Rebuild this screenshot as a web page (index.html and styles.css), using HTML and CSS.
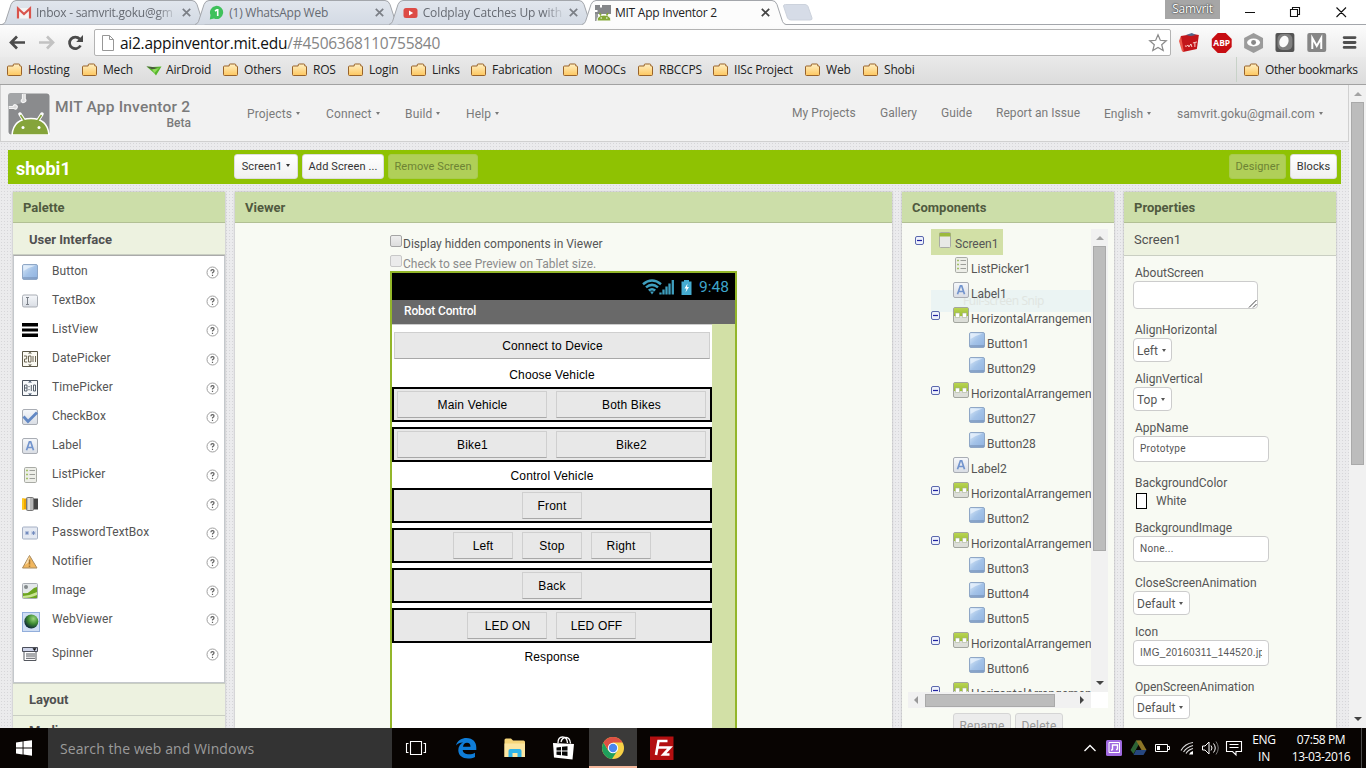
FILE: index.html
```html
<!DOCTYPE html>
<html lang="en">
<head>
<meta charset="utf-8">
<title>MIT App Inventor 2</title>
<link rel="stylesheet" href="styles.css">
</head>
<body>
<svg class="defs" width="0" height="0">
  <defs>
    <linearGradient id="gFolder" x1="0" y1="0" x2="0" y2="1"><stop offset="0" stop-color="#fff0c4"/><stop offset="1" stop-color="#fdc75f"/></linearGradient>
    <linearGradient id="gBlue" x1="0" y1="0" x2="1" y2="1"><stop offset="0" stop-color="#dcebf9"/><stop offset=".5" stop-color="#a4c3e8"/><stop offset="1" stop-color="#8fb2e0"/></linearGradient>
    <linearGradient id="gGrey" x1="0" y1="0" x2="0" y2="1"><stop offset="0" stop-color="#f6f8fb"/><stop offset="1" stop-color="#d9dde4"/></linearGradient>
    <linearGradient id="gTab" x1="0" y1="0" x2="0" y2="1"><stop offset="0" stop-color="#e1e6ed"/><stop offset="1" stop-color="#d3dae4"/></linearGradient>
    <radialGradient id="gGlobe" cx=".65" cy=".3" r=".75"><stop offset="0" stop-color="#9ad57c"/><stop offset=".5" stop-color="#3f8c33"/><stop offset="1" stop-color="#0b2238"/></radialGradient>
    <linearGradient id="gGreen" x1="0" y1="0" x2="0" y2="1"><stop offset="0" stop-color="#b9d452"/><stop offset="1" stop-color="#9cbf33"/></linearGradient>
    <symbol id="folder" viewBox="0 0 16 14"><path d="M1.5 12.500h12q1 0 1-1V4q0-1-1-1h-.7V2q0-1-1-1H7.200q-1 0-1 1v1H1.500q-1 0-1 1v7.500q0 1 1 1z" fill="url(#gFolder)" stroke="#99632a"/></symbol>
    <symbol id="tabshape" viewBox="0 0 204 25"><path d="M0 24.500Q2.500 24 3.500 21.500L9 4.500Q10.500.5 14 .5H190Q193.500.5 195 4.500L200.500 21.500Q201.500 24 204 24.500" fill="url(#gTab)" stroke="#a3a6ab"/></symbol>
    <symbol id="tabshape-on" viewBox="0 0 204 25"><path d="M0 24.500Q2.500 24 3.500 21.500L9 4.500Q10.500.5 14 .5H190Q193.500.5 195 4.500L200.500 21.500Q201.500 24 204 24.500V25H0Z" fill="#fcfcfc"/><path d="M0 24.500Q2.500 24 3.500 21.500L9 4.500Q10.500.5 14 .5H190Q193.500.5 195 4.500L200.500 21.500Q201.500 24 204 24.500" fill="none" stroke="#a3a6ab"/></symbol>
    <symbol id="close" viewBox="0 0 9 9"><path d="M.8.8 8.200 8.200M8.200.8.8 8.200" stroke="currentColor" stroke-width="1.700" fill="none"/></symbol>
    <symbol id="logo" viewBox="0 0 42 42"><rect x=".5" y=".5" width="41" height="41" rx="3" fill="#8a8b8d"/><path d="M0 3Q0 0 3 0H14.500V5.500q-2.500 1-1.500 3t-4 2.500q-1 2.500-3.500 2H0z" fill="#a3a5a7"/><path d="M1 13.500h4q1-2.500 3-1.500t1 3-3 .5H1M14.500 1v5q-2 1-1 2.700t3.200.3.500-3V1" fill="#dcdcdc" stroke="#f4f4f4" stroke-width="1.200"/><path d="M12 21l4.500 7M34 21l-4.500 7" stroke="#fff" stroke-width="3.500" stroke-linecap="round"/><path d="M4 42C5 30 13 25.500 23 25.500S40 30 41 42z" fill="#85a43a" stroke="#fff" stroke-width="1.500"/><path d="M12.500 22l4 6M33.500 22l-4 6" stroke="#85a43a" stroke-width="1.500"/><circle cx="15" cy="34.500" r="1.500" fill="#fff"/><circle cx="31" cy="34.500" r="1.500" fill="#fff"/></symbol>
    <symbol id="logosmall" viewBox="0 0 16 16"><path d="M0 0h16v9H0z" fill="#85878a"/><path d="M0 5h2.500v2H0zM5 0h2v2.500H5z" fill="#fff"/><path d="M0 9h3v7H0z" fill="#9a9c9e"/><path d="M2 16q0-6 7-6t7 6z" fill="#84a838" stroke="#fff" stroke-width="1"/><path d="M4.500 8l1.500 2.500M13 8l-1.500 2.500" stroke="#84a838" stroke-width="1.500"/><path d="M5.500 13h1.500M11 13h1.500" stroke="#fff" stroke-width="1.200"/></symbol>
    <symbol id="button" viewBox="0 0 16 16"><rect x=".5" y=".5" width="15" height="15" rx="1.500" fill="url(#gBlue)" stroke="#8fa7c6"/><path d="M1.500 1.500h12Q8 3 1.500 7z" fill="#e8f2fc" opacity=".75"/><path d="M1 13.500h14v1H1z" fill="#7089ad"/></symbol>
    <symbol id="textbox" viewBox="0 0 16 16"><rect x=".5" y="2" width="15" height="12" rx="1.500" fill="url(#gGrey)" stroke="#a9adb4"/><path d="M4 4.500h3M4 11.500h3M5.500 4.500v7" stroke="#7b8088" fill="none"/></symbol>
    <symbol id="listview" viewBox="0 0 16 16"><path d="M0 1h16v3.500H0zM0 6.500h16v3H0zM0 11.500h16V15H0z"/></symbol>
    <symbol id="datepicker" viewBox="0 0 16 16"><path d="M.5.5h15v15H.5z" fill="#fbfaf3" stroke="#5b5747"/><path d="M6 2.500L8 .800l2 1.700zM6 13.500l2 1.700 2-1.700z" fill="#5b5747"/><path d="M2 5h2.700v3H2.500v3h2.700M6.500 5h2.500v6H6.500zM11 5v6M13.500 5v6" fill="none" stroke="#6c6552"/></symbol>
    <symbol id="timepicker" viewBox="0 0 16 16"><path d="M.5.5h15v15H.5z" fill="#f7f9fb" stroke="#4d5560"/><path d="M6 2.500L8 .800l2 1.700zM6 13.500l2 1.700 2-1.700z" fill="#3d4f68"/><path d="M2.500 5H5v6H2.500zM2.500 8H5M7 6v1.200M7 9v1.200M9.300 5v6M11.500 5h2v6h-2z" fill="none" stroke="#56606c"/></symbol>
    <symbol id="checkbox" viewBox="0 0 16 16"><rect x=".5" y=".5" width="15" height="15" rx="1.500" fill="url(#gGrey)" stroke="#a9adb4"/><path d="M1.500 7.500L6 12.500 15 3.500" fill="none" stroke="#6288c4" stroke-width="2.800"/></symbol>
    <symbol id="label" viewBox="0 0 16 16"><rect x=".5" y=".5" width="15" height="15" rx="1.500" fill="url(#gGrey)" stroke="#a9adb4"/><path d="M4.500 12.300L7.400 3.800h1.300l2.800 8.500M5.800 9.500h4.400" fill="none" stroke="#7294cd" stroke-width="1.700"/></symbol>
    <symbol id="listpicker" viewBox="0 0 16 16"><rect x="2.500" y=".5" width="12" height="15" rx="1.200" fill="#edeee8" stroke="#a9aba5"/><path d="M4 3.500h2M4 7.500h2M4 11.500h2" stroke="#a3c266" stroke-width="1.500"/><path d="M7.500 3.500H13M7.500 7.500H13M7.500 11.500H13" stroke="#9c9e99"/></symbol>
    <symbol id="slider" viewBox="0 0 16 16"><path d="M0 2.500h5v11H0z" fill="#f0a800"/><path d="M0 2.500h2v11H0z" fill="#ffc91e"/><path d="M11 2.500h5v11h-5z" fill="#444"/><rect x="4.500" y="1.500" width="7" height="13" rx="1" fill="#b7b7b7" stroke="#777"/><path d="M7 2v12" stroke="#ddd" stroke-width="2"/></symbol>
    <symbol id="password" viewBox="0 0 16 16"><rect x=".5" y="2" width="15" height="12" rx="1" fill="#e4e9f2" stroke="#a5b0c4"/><path d="M3 8h4M5 6v4M3.600 6.600l2.800 2.800M6.400 6.600L3.600 9.400M9.500 8h4M11.500 6v4M10.100 6.600l2.800 2.800M12.900 6.600l-2.800 2.800" stroke="#6f89bd" stroke-width=".9"/></symbol>
    <symbol id="notifier" viewBox="0 0 16 16"><path d="M7.500 1.500L15 14H.500z" fill="#f1b75f" stroke="#a88a5e"/><path d="M7.500 2L3 11l4-3z" fill="#fbe2b5"/><path d="M7.500 5.500v5M7.500 11.500v1.500" stroke="#a57634" stroke-width="1.500"/></symbol>
    <symbol id="image" viewBox="0 0 16 16"><rect x=".5" y=".5" width="15" height="15" rx="1" fill="#e4e8ea" stroke="#a9adb4"/><circle cx="4" cy="4" r="2" fill="#84898c"/><path d="M1 10Q6 11 9 7.500T15 4v11H1z" fill="#6ca51f"/><path d="M1 13Q8 12.500 15 9v3Q9 15 1 15z" fill="#c9e492"/></symbol>
    <symbol id="webviewer" viewBox="0 0 18 20"><rect x=".5" y=".5" width="17" height="19" fill="#cfdef4" stroke="#92aedb"/><circle cx="9.300" cy="9.500" r="7" fill="url(#gGlobe)"/></symbol>
    <symbol id="spinner" viewBox="0 0 16 16"><path d="M.5 1.500h15v4H.5z" fill="#cdd3e8" stroke="#4c4f5a"/><path d="M10.500 2.300h4L12.500 5z" fill="#111"/><path d="M2 6v8.500h12V6M4 8h9M4 10h9M4 12.300h9" fill="none" stroke="#55585f"/></symbol>
    <symbol id="screen" viewBox="0 0 16 16"><rect x="2.500" y=".5" width="11" height="15" rx="1" fill="#e8e9e6" stroke="#a9aba5"/><path d="M2.500 1h11v3.500h-11z" fill="#9bb93d"/></symbol>
    <symbol id="harr" viewBox="0 0 16 16"><rect x=".5" y=".5" width="15" height="15" rx="1.500" fill="#dcded8" stroke="#a3a69f"/><path d="M1 1h14v8H1z" fill="url(#gGreen)"/><path d="M2.500 6h4v4.500h-4zM9.500 6h4v4.500h-4z" fill="#fff" stroke="#aab497" stroke-width=".6"/></symbol>
    <symbol id="minus" viewBox="0 0 9 9"><rect x=".5" y=".5" width="8" height="8" rx="1.500" fill="#eef1fb" stroke="#5b68ad"/><path d="M2 4.500h5" stroke="#2222a0" stroke-width="1.200"/></symbol>
    <symbol id="help" viewBox="0 0 13 13"><circle cx="6.500" cy="6.500" r="5.500" fill="#fff" stroke="#9f9f9f"/><path d="M4.900 5.200q0-1.600 1.600-1.600T8 5.100q0 .9-1.500 1.700v.8M6.500 8.700v1.200" fill="none" stroke="#606060" stroke-width="1.200"/></symbol>
  </defs>
</svg>

<div class="tabstrip">
  <div class="tab"><svg class="shape"><use href="#tabshape"/></svg>
    <svg class="fav" viewBox="0 0 16 16"><path d="M1 3h14v10.500H1z" fill="#f3f3f3"/><path d="M2 13.500V3.500L8 9l6-5.500v10" fill="none" stroke="#d9544c" stroke-width="2.200"/></svg>
    <span class="tt fade">Inbox - samvrit.goku@gm</span><svg class="x"><use href="#close"/></svg></div>
  <div class="tab"><svg class="shape"><use href="#tabshape"/></svg>
    <svg class="fav" viewBox="0 0 16 16"><path d="M.8 14.500L1.500 10A6.600 6.600 0 1 1 5 13.500z" fill="#3fc15b"/><path d="M6 6l2-1.200h.7V11" fill="none" stroke="#fff" stroke-width="1.600"/></svg>
    <span class="tt">(1) WhatsApp Web</span><svg class="x"><use href="#close"/></svg></div>
  <div class="tab"><svg class="shape"><use href="#tabshape"/></svg>
    <svg class="fav" viewBox="0 0 16 16"><rect x=".5" y="3" width="14" height="10" rx="2.500" fill="#dd4b45"/><path d="M6 5.500v5L10.200 8z" fill="#fff"/></svg>
    <span class="tt fade t3">Coldplay Catches Up with</span><svg class="x"><use href="#close"/></svg></div>
  <div class="tab on"><svg class="shape"><use href="#tabshape-on"/></svg>
    <svg class="fav"><use href="#logosmall"/></svg>
    <span class="tt">MIT App Inventor 2</span><svg class="x"><use href="#close"/></svg></div>
  <svg class="newtab" viewBox="0 0 34 18"><path d="M1.500 2Q1.500.5 3.500.5H23q2 0 3 2l4 11.500q.5 2-2 2H9q-2.500 0-3.500-2z" fill="#d6dce7" stroke="#ccd2dc"/></svg>
  <div class="winctl">
    <span class="user">Samvrit</span>
    <svg viewBox="0 0 120 25"><path d="M15 12.500h10M60.500 9.500h7v7h-7zM62.500 9V7.500h7v7H68M106.500 7.500l9.500 9.500M116 7.500L106.500 17" fill="none" stroke="#111" stroke-width="1.100"/></svg>
  </div>
</div>

<div class="toolbar">
  <svg class="navs" viewBox="0 0 94 32"><path d="M25 17.500H12M17 11.500l-6 6 6 6" fill="none" stroke="#4b4b4b" stroke-width="2.700"/><path d="M39 17.500h13M47 11.500l6 6-6 6" fill="none" stroke="#c2c2c2" stroke-width="2.700"/><path d="M80.500 20.500a5.800 5.800 0 1 1-.800-6.500" fill="none" stroke="#4b4b4b" stroke-width="2.700"/><path d="M83 10v7h-6.800z" fill="#4b4b4b"/></svg>
  <div class="omni">
    <svg class="page" viewBox="0 0 12 16"><path d="M.5.5h7l4 4v11H.5zM7.500.5v4h4" fill="#fff" stroke="#979797"/></svg>
    <span class="url">ai2.appinventor.mit.edu<i>/#4506368110755840</i></span>
    <svg class="star" viewBox="0 0 20 20"><path d="M10 1.800l2.300 5.500 6 .5-4.600 3.900 1.500 5.800L10 14.400l-5.200 3.100 1.500-5.800L1.700 7.800l6-.5z" fill="#fff" stroke="#8a8a8a" stroke-width="1.200"/></svg>
  </div>
  <svg class="exts" viewBox="0 0 196 32">
    <path d="M9 11l12-2 6 1-2 14-14 3L9 18z" fill="#c2151a"/><path d="M9 11l3 16 -2-1-3-10z" fill="#ee5a4d"/><path d="M14 10l6-2 4 2-5 1z" fill="#53678c"/><path d="M13 21q2 1 3-1l1 2 2-3 1 3M21 18l4-1M23 18v4" stroke="#fbd6cf" fill="none"/>
    <path d="M46 8h8l6 6v8l-6 6h-8l-6-6v-8z" fill="#c70d12"/><text x="50" y="21.200" class="abp">ABP</text>
    <path d="M82 8l9.500 5v10L82 28l-9.500-5V13z" fill="#9b9b9b"/><ellipse cx="82" cy="17.500" rx="6.500" ry="4" fill="#fff"/><circle cx="82" cy="17.500" r="2.500" fill="#888"/>
    <rect x="104" y="8" width="19" height="19" rx="2" fill="#545454"/><rect x="106" y="9" width="15" height="16" rx="5" fill="#808080"/><ellipse cx="112.500" cy="16.500" rx="4.500" ry="6" transform="rotate(20 112.500 16.500)" fill="#fafafa"/>
    <rect x="136" y="8" width="19" height="19" rx="2" fill="#868686"/><path d="M141 24V13l4.500 8 4.500-8V24" fill="none" stroke="#fff" stroke-width="2"/>
    <path d="M173 12.500h11M173 17.500h11M173 22.500h11" stroke="#4f4f4f" stroke-width="2.800" stroke-linecap="round"/>
  </svg>
</div>

<div class="bookmarks">
  <span class="bm"><svg><use href="#folder"/></svg>Hosting</span>
  <span class="bm"><svg><use href="#folder"/></svg>Mech</span>
  <span class="bm air"><svg viewBox="0 0 16 14"><path d="M.5 3.500l6 .5 9-.5-5.500 9-2-2.500z" fill="#57b62b"/><path d="M.5 3.500l6 .5 6 1-6 1.500z" fill="#4a5a3e"/><path d="M6 6.500l7-1.500-4.500 5z" fill="#8fdc5a"/></svg>AirDroid</span>
  <span class="bm"><svg><use href="#folder"/></svg>Others</span>
  <span class="bm"><svg><use href="#folder"/></svg>ROS</span>
  <span class="bm"><svg><use href="#folder"/></svg>Login</span>
  <span class="bm"><svg><use href="#folder"/></svg>Links</span>
  <span class="bm"><svg><use href="#folder"/></svg>Fabrication</span>
  <span class="bm"><svg><use href="#folder"/></svg>MOOCs</span>
  <span class="bm"><svg><use href="#folder"/></svg>RBCCPS</span>
  <span class="bm"><svg><use href="#folder"/></svg>IISc Project</span>
  <span class="bm"><svg><use href="#folder"/></svg>Web</span>
  <span class="bm"><svg><use href="#folder"/></svg>Shobi</span>
  <span class="bm other"><svg><use href="#folder"/></svg>Other bookmarks</span>
</div>

<div class="page-wrap">
  <div class="site">
    <header class="top">
      <svg class="logo"><use href="#logo"/></svg>
      <div class="brand"><b>MIT App Inventor 2</b><span>Beta</span></div>
      <nav class="menu"><a class="dd">Projects</a><a class="dd">Connect</a><a class="dd">Build</a><a class="dd">Help</a></nav>
      <nav class="links"><a>My Projects</a><a>Gallery</a><a>Guide</a><a>Report an Issue</a><a class="dd">English</a><a class="dd">samvrit.goku@gmail.com</a></nav>
    </header>

    <div class="greenbar">
      <span class="proj">shobi1</span>
      <span class="btn dd b1">Screen1</span><span class="btn b2">Add Screen ...</span><span class="btn off b3">Remove Screen</span>
      <span class="btn off b4">Designer</span><span class="btn b5">Blocks</span>
    </div>

    <main class="cols">
      <section class="panel palette">
        <h2>Palette</h2>
        <h3>User Interface</h3>
        <ul class="items">
          <li><svg><use href="#button"/></svg><span>Button</span><svg class="q"><use href="#help"/></svg></li>
          <li><svg><use href="#textbox"/></svg><span>TextBox</span><svg class="q"><use href="#help"/></svg></li>
          <li><svg><use href="#listview"/></svg><span>ListView</span><svg class="q"><use href="#help"/></svg></li>
          <li><svg><use href="#datepicker"/></svg><span>DatePicker</span><svg class="q"><use href="#help"/></svg></li>
          <li><svg><use href="#timepicker"/></svg><span>TimePicker</span><svg class="q"><use href="#help"/></svg></li>
          <li><svg><use href="#checkbox"/></svg><span>CheckBox</span><svg class="q"><use href="#help"/></svg></li>
          <li><svg><use href="#label"/></svg><span>Label</span><svg class="q"><use href="#help"/></svg></li>
          <li><svg><use href="#listpicker"/></svg><span>ListPicker</span><svg class="q"><use href="#help"/></svg></li>
          <li><svg><use href="#slider"/></svg><span>Slider</span><svg class="q"><use href="#help"/></svg></li>
          <li><svg><use href="#password"/></svg><span>PasswordTextBox</span><svg class="q"><use href="#help"/></svg></li>
          <li><svg><use href="#notifier"/></svg><span>Notifier</span><svg class="q"><use href="#help"/></svg></li>
          <li><svg><use href="#image"/></svg><span>Image</span><svg class="q"><use href="#help"/></svg></li>
          <li class="tall"><svg><use href="#webviewer"/></svg><span>WebViewer</span><svg class="q"><use href="#help"/></svg></li>
          <li><svg><use href="#spinner"/></svg><span>Spinner</span><svg class="q"><use href="#help"/></svg></li>
        </ul>
        <h3>Layout</h3>
        <h3>Media</h3>
      </section>

      <section class="panel viewer">
        <h2>Viewer</h2>
        <div class="stage">
          <div class="chk"><i></i>Display hidden components in Viewer</div>
          <div class="chk dim"><i></i>Check to see Preview on Tablet size.</div>
          <div class="phone">
            <div class="status">
              <svg viewBox="0 0 50 16"><g fill="none" stroke="#3f9fbf" stroke-width="2.500"><path d="M1 5.200q9-7.500 18 0M4 8.400q6-5 12 0M6.800 11.500q3.200-2.500 6.400 0"/></g><path d="M8 12.500h4l-2 3z" fill="#3f9fbf"/><path d="M18.500 15.500v-2M21.500 15.500v-5M24.500 15.500v-8M27.500 15.500v-11M30.800 15.500V1" stroke="#3f9fbf" stroke-width="2.300"/><path d="M39.500 2.500H42V1h5v1.500h2.500V16h-10z" fill="#45abd0"/><path d="M45.500 4.500l-3 5h2l-1 4 3.500-5.500h-2z" fill="#fff"/></svg>
              <span>9:48</span>
            </div>
            <div class="apptitle">Robot Control</div>
            <div class="form">
              <div class="formbody">
                <div class="pb wide">Connect to Device</div>
                <div class="lbl">Choose Vehicle</div>
                <div class="arr"><span class="pb w150">Main Vehicle</span><span class="pb w150">Both Bikes</span></div>
                <div class="arr"><span class="pb w150">Bike1</span><span class="pb w150">Bike2</span></div>
                <div class="lbl">Control Vehicle</div>
                <div class="arr"><span class="pb w60">Front</span></div>
                <div class="arr"><span class="pb w60">Left</span><span class="pb w60">Stop</span><span class="pb w60">Right</span></div>
                <div class="arr"><span class="pb w60">Back</span></div>
                <div class="arr"><span class="pb w80">LED ON</span><span class="pb w80">LED OFF</span></div>
                <div class="lbl">Response</div>
              </div>
            </div>
          </div>
        </div>
      </section>

      <section class="panel components">
        <h2>Components</h2>
        <div class="treebox">
          <div class="tree">
            <div class="snip">Full-screen Snip</div>
            <div class="row root"><svg class="mn"><use href="#minus"/></svg><span class="sel"><svg><use href="#screen"/></svg>Screen1</span></div>
            <div class="row l1"><svg><use href="#listpicker"/></svg>ListPicker1</div>
            <div class="row l1"><svg><use href="#label"/></svg>Label1</div>
            <div class="row l1"><svg class="mn"><use href="#minus"/></svg><svg><use href="#harr"/></svg>HorizontalArrangement1</div>
            <div class="row l2"><svg><use href="#button"/></svg>Button1</div>
            <div class="row l2"><svg><use href="#button"/></svg>Button29</div>
            <div class="row l1"><svg class="mn"><use href="#minus"/></svg><svg><use href="#harr"/></svg>HorizontalArrangement2</div>
            <div class="row l2"><svg><use href="#button"/></svg>Button27</div>
            <div class="row l2"><svg><use href="#button"/></svg>Button28</div>
            <div class="row l1"><svg><use href="#label"/></svg>Label2</div>
            <div class="row l1"><svg class="mn"><use href="#minus"/></svg><svg><use href="#harr"/></svg>HorizontalArrangement3</div>
            <div class="row l2"><svg><use href="#button"/></svg>Button2</div>
            <div class="row l1"><svg class="mn"><use href="#minus"/></svg><svg><use href="#harr"/></svg>HorizontalArrangement4</div>
            <div class="row l2"><svg><use href="#button"/></svg>Button3</div>
            <div class="row l2"><svg><use href="#button"/></svg>Button4</div>
            <div class="row l2"><svg><use href="#button"/></svg>Button5</div>
            <div class="row l1"><svg class="mn"><use href="#minus"/></svg><svg><use href="#harr"/></svg>HorizontalArrangement5</div>
            <div class="row l2"><svg><use href="#button"/></svg>Button6</div>
            <div class="row l1"><svg class="mn"><use href="#minus"/></svg><svg><use href="#harr"/></svg>HorizontalArrangement6</div>
          </div>
          <div class="vs"><i class="up pale"></i><b></b><i class="down"></i></div>
          <div class="hs"><i class="left"></i><b></b><i class="right"></i></div>
          <div class="corner"></div>
        </div>
        <div class="cbtns"><span>Rename</span><span>Delete</span></div>
      </section>

      <section class="panel props">
        <h2>Properties</h2>
        <h4>Screen1</h4>
        <div class="pl">
          <label>AboutScreen</label><div class="area"><svg viewBox="0 0 9 9"><path d="M1 8.500L8.500 1M5 8.500L8.500 5" stroke="#444" fill="none"/></svg></div>
          <label>AlignHorizontal</label><div class="sel2 dd">Left</div>
          <label>AlignVertical</label><div class="sel2 dd">Top</div>
          <label>AppName</label><div class="inp">Prototype</div>
          <label>BackgroundColor</label><div class="color"><i></i>White</div>
          <label>BackgroundImage</label><div class="inp">None...</div>
          <label>CloseScreenAnimation</label><div class="sel2 dd long">Default</div>
          <label>Icon</label><div class="inp img"><span>IMG_20160311_144520.jpg</span></div>
          <label>OpenScreenAnimation</label><div class="sel2 dd long">Default</div>
        </div>
      </section>
    </main>
  </div>
  <div class="scroll"><i class="up"></i><b></b><i class="down"></i></div>
</div>

<footer class="taskbar">
  <svg class="start" viewBox="0 0 48 40"><path d="M16 14.400l6.600-.9v6H16zM23.500 13.300L32 12.200v7.300h-8.500zM16 20.400h6.600v6l-6.600-.9zM23.500 20.400H32v7.300l-8.500-1.200z" fill="#fff"/></svg>
  <div class="search">Search the web and Windows</div>
  <svg class="tasks" viewBox="392 0 300 40">
    <path d="M410.500 13.500h11v13h-11zM408.500 15.500h-2v9h2M423.500 15.500h2v9h-2" fill="none" stroke="#fff" stroke-width="1.100"/>
    <path d="M456 17.500C457.500 12 462 10 466.500 10c6.500 0 9.800 4.300 9.800 9.500v2.500h-13.600c.3 3 3 4.300 6.300 4.300 2.300 0 4.300-.6 6-1.600v4.200c-2 1-4.300 1.500-7 1.500-5.500 0-9.700-3-9.700-8.200 0-3.300 1.700-6.200 4.700-7.700-3 0-5.500 1-7 3zm7 1.300h7.500c0-2.500-1.200-4-3.500-4-2.200 0-3.600 1.500-4 4z" fill="#0f7dd8"/>
    <path d="M504.500 12q0-1.500 1.500-1.500h5l2 2h10.500q1.500 0 1.500 1.500V29h-20.500z" fill="#f5d57a"/><path d="M504.500 15.500H525V29h-20.500z" fill="#fbe6a2"/><path d="M508.500 29v-6q0-2 2-2h9q2 0 2 2v6h-4v-4h-5v4z" fill="#2fb4e8"/>
    <path d="M553 15l21 1-1.500 15.500L554 29.500z" fill="#fff"/><path d="M558 15q0-6 4.500-6t5 6M561 14q1-4.500 5-4.500t4.500 6" fill="none" stroke="#fff" stroke-width="1.300"/><path d="M556.500 19.500l4.500-.5v3.500h-4.500zM562 18.800l5.500-.6v4.300H562zM556.500 23.500h4.500v3.700l-4.500-.5zM562 23.500h5.500v4.400L562 27.300z" fill="#060606"/>
    <path d="M589 0h48v38h-48z" fill="#3b3a39"/><path d="M589 38h48v2h-48z" fill="#f3b79c"/>
    <circle cx="613" cy="20" r="11" fill="#f7d046"/><path d="M603.500 14.500A11 11 0 0 0 612 31L617.500 22.500 608.200 22.500z" fill="#1f9f5c"/><path d="M603.500 14.500A11 11 0 0 1 622.600 14.500H613L608 22z" fill="#dd5044"/><circle cx="613" cy="20" r="5.200" fill="#fff"/><circle cx="613" cy="20" r="4.200" fill="#4b86f0"/>
    <path d="M650 8.500h23.500V32H650z" fill="#b30f10"/><path d="M656 27l2.500-14h9M657 19.500h6.500M663.500 19.500h6.500l-6.500 7h6" fill="none" stroke="#fff" stroke-width="2.600"/>
  </svg>
  <svg class="tray" viewBox="1080 0 166 40">
    <path d="M1084.500 23l5.500-5.500 5.500 5.500" fill="none" stroke="#fff" stroke-width="1.300"/>
    <rect x="1106" y="12" width="16" height="16" rx="1.500" fill="#a06ae0"/><path d="M1109 14.500h10.500v10H1109z" fill="none" stroke="#fff"/><path d="M1112.500 22v-5h5v4.500M1111 22h1.500M1116 21.500h1.500" fill="none" stroke="#fff" stroke-width="1.400"/>
    <path d="M1136 12.500h5l-5 9-2.500 4.500-3-4z" fill="#2c6335"/><path d="M1136 12.500h5l5.500 9.500h-5z" fill="#8b7426"/><path d="M1133.500 27l2.500-5h10.500l-3 5z" fill="#27477f"/>
    <path d="M1155.500 16.500h12v7h-12zM1168 18.500h1.500v3h-1.500" fill="none" stroke="#fff"/><path d="M1157 18h3v4h-3z" fill="#fff"/>
    <path d="M1181 22.500Q1185 15.500 1193 14.500M1183.500 24Q1187 19 1193 17.500M1186 25.500Q1188.500 21.500 1193 20.500" fill="none" stroke="#ddd" stroke-width="1.200"/><path d="M1189 26.500q1-3 4-3.500v3.500z" fill="#fff"/>
    <path d="M1202.500 18v4h2.500l4 4V14l-4 4z" fill="none" stroke="#fff"/><path d="M1211 17.500q2 2.500 0 5M1213.500 15.500q3.500 4.500 0 9" fill="none" stroke="#fff"/><path d="M1216 13.500q4.500 6.500 0 13" fill="none" stroke="#777"/>
    <path d="M1226.500 13.500h15v10h-5.500v3.500l-3.500-3.500h-6zM1229.500 16.500h9M1229.500 19.500h9" fill="none" stroke="#fff" stroke-width="1.100"/>
  </svg>
  <div class="lang">ENG<br>IN</div>
  <div class="clock">07:58 PM<br>13-03-2016</div>
  <div class="peek"></div>
</footer>
</body>
</html>
```

FILE: styles.css
```css
* { box-sizing: border-box; }
body { margin: 0; width: 1366px; height: 768px; overflow: hidden; display: flex; flex-direction: column; font-family: Roboto, "Liberation Sans", sans-serif; font-size: 12px; color: #555; background: #fff; }
.defs { position: absolute; }
svg { display: block; flex: none; }
h2, h3, h4, ul { margin: 0; padding: 0; list-style: none; }

/* browser tabs */
.tabstrip { height: 25px; flex: none; display: flex; padding-left: 2px; background: #fff; border-bottom: 1px solid #a3a6ab; font: 12px/25px "Open Sans", "Noto Sans", sans-serif; color: #666a72; }
.tab { position: relative; width: 204px; height: 25px; margin-right: -10.700px; padding-left: 14px; display: flex; align-items: center; flex: none; }
.tab.on { color: #222; z-index: 2; padding-left: 13px; }
.shape { position: absolute; left: 0; top: 0; width: 204px; height: 25px; }
.fav { position: relative; width: 16px; height: 16px; margin-right: 4px; }
.tt { position: relative; width: 142px; white-space: nowrap; overflow: hidden; letter-spacing: -.25px; }
.tt.t3 { letter-spacing: -.1px; }
.fade { -webkit-mask-image: linear-gradient(90deg, #000 85%, transparent); mask-image: linear-gradient(90deg, #000 85%, transparent); }
.x { position: relative; width: 9px; height: 9px; margin-left: 4px; color: #7b7f86; }
.on .x { color: #444; }
.newtab { width: 34px; height: 18px; margin: 4px 0 0 7px; }
.winctl { margin-left: auto; display: flex; width: 201px; }
.winctl svg { width: 120px; height: 25px; margin-left: 10px; }
.user { width: 55px; height: 19px; background: #a6a6a6; color: #fff; text-align: center; line-height: 18px; text-shadow: 0 0 2px #333, 0 0 1px #333; letter-spacing: -.3px; }

/* toolbar */
.toolbar { height: 32px; flex: none; display: flex; background: linear-gradient(#fcfcfc, #ebebeb); }
.navs { width: 94px; height: 32px; }
.omni { width: 1077px; height: 27px; margin-top: 4px; border: 1px solid #b3b3b3; border-radius: 2px; background: #fff; display: flex; align-items: center; padding-left: 7px; }
.page { width: 12px; height: 16px; }
.url { flex: 1; margin-left: 6px; font: 15.500px/24px "Open Sans", "Noto Sans", sans-serif; letter-spacing: -.26px; color: #111; }
.url i { font-style: normal; color: #858585; }
.star { width: 20px; height: 20px; margin-right: 2px; }
.exts { width: 195px; height: 32px; margin-left: 1px; margin-right: -1px; }
.abp { font: bold 8.500px "Open Sans", sans-serif; fill: #fff; text-anchor: middle; }

.bookmarks { height: 28px; flex: none; display: flex; padding: 0 0 2px 7px; border-bottom: 1px solid #a2a2a2; background: linear-gradient(#e9e9e9, #dcdcdc); font: 12px/26px "Open Sans", "Noto Sans", sans-serif; letter-spacing: -.2px; color: #222; }
.bm { display: flex; align-items: center; flex: none; white-space: nowrap; width: 75px; }
.bm svg { width: 16px; height: 14px; margin-right: 5px; }
.bm:nth-child(2) { width: 64px; }
.bm:nth-child(3) { width: 77px; }
.bm:nth-child(4) { width: 69px; }
.bm:nth-child(5) { width: 56px; }
.bm:nth-child(6) { width: 63px; }
.bm:nth-child(7) { width: 60px; }
.bm:nth-child(8) { width: 92px; }
.bm:nth-child(11) { width: 92px; }
.bm:nth-child(12) { width: 58px; }
.bm.air svg { margin-right: 4px; }
.bm.other { width: 130px; margin-left: auto; border-left: 1px solid #c8d2c8; padding-left: 7px; letter-spacing: -.4px; }

/* page */
.page-wrap { height: 643px; flex: none; display: flex; overflow: hidden; }
.site { width: 1349px; background-color: #ebebed; background-image: radial-gradient(#d6d6d9 .7px, transparent .9px); background-size: 3px 3px; }
.top { height: 57px; display: flex; background: #f2f2f2; border: 1px solid #d0d0d0; border-top: 0; color: #7a7a7a; }
.logo { width: 42px; height: 42px; margin: 8px 0 0 7px; }
.brand { width: 191px; padding: 13px 49px 0 5px; display: flex; flex-direction: column; line-height: 16px; }
.brand b { font-size: 15.500px; font-weight: 500; white-space: nowrap; line-height: 18px; letter-spacing: .2px; }
.brand span { align-self: flex-end; margin-right: 1px; line-height: 14px; font-size: 12px; font-weight: 500; }
.menu, .links { display: flex; line-height: 16px; padding-top: 21px; letter-spacing: .15px; }
.menu { margin-left: 6px; width: 545px; }
.menu a { width: 79px; }
.menu a:nth-child(3) { width: 61px; }
.dd::after { content: ""; display: inline-block; margin-left: 4px; vertical-align: 3px; border: 2.500px solid transparent; border-top: 3.500px solid currentColor; border-bottom: 0; }
.links { padding-top: 20px; letter-spacing: .05px; }
.links a { white-space: nowrap; width: 88px; }
.links a:nth-child(2) { width: 61px; }
.links a:nth-child(3) { width: 55px; }
.links a:nth-child(4) { width: 108px; }
.links a:nth-child(5) { width: 73px; }
.links a:nth-child(n+5) { padding-top: 1px; }

.greenbar { margin: 8px 8px 8px; height: 34px; background: #8fc202; display: flex; align-items: flex-start; padding-top: 4px; }
.proj { width: 226px; padding-left: 8px; font-size: 18px; font-weight: 700; color: #fff; line-height: 30px; }
.btn { height: 25px; border-radius: 3px; background: linear-gradient(#fff, #f0f0f0); border: 1px solid #ddd; line-height: 23px; text-align: center; font-size: 11px; color: #333; letter-spacing: .1px; margin-right: 4px; }
.btn.off { background: #b0cf58; border-color: #a9cb4e; color: #6d8334; }
.b1 { width: 64px; }
.b2 { width: 82px; }
.b3 { width: 90px; }
.b4 { width: 57px; margin-left: auto; }
.b5 { width: 47px; }

.cols { display: flex; padding-left: 13px; gap: 10px; height: 536px; }
.panel { width: 212px; background: #f8faf3; box-shadow: 0 0 2px #aaa; overflow: hidden; }
.viewer { width: 657px; }
.panel h2 { height: 31px; background: #ccdea9; border-bottom: 1px solid #b2c094; font-size: 13px; line-height: 31px; padding-left: 10px; color: #505a3f; font-weight: 700; }
.panel h3, .panel h4 { height: 32px; background: #edf2e0; border-bottom: 1px solid #c9cec2; line-height: 33px; font-size: 13px; padding-left: 16px; color: #505050; }
.panel h4 { padding-left: 10px; font-weight: 400; height: 33px; }
.panel .items + h3 { border-top: 1px solid #c9cec2; height: 33px; line-height: 31px; }
.items + h3 + h3 { line-height: 30px !important; }
.items { height: 428px; background: #fff; border: 1px solid #c4c8cc; border-top: 1px solid #aaa; margin: 0; padding-top: 1px; }
.items li { height: 29px; display: flex; align-items: center; padding-left: 8px; letter-spacing: .08px; }
.items li svg { width: 16px; height: 16px; margin-top: 1px; }
.items li span { width: 154px; margin-left: 14px; padding-bottom: 2px; }
.items li svg.q { width: 13px; height: 13px; }
.items .tall { height: 34px; align-items: flex-start; }
.items .tall svg { width: 18px; height: 20px; margin-top: 7px; }
.items .tall span { margin-left: 12px; line-height: 28px; }
.items .tall svg.q { margin-top: 8px; }

.stage { padding: 12px 0 0 155px; }
.chk { height: 20px; display: flex; line-height: 19px; }
.chk i { width: 12px; height: 12px; border: 1px solid #a5a5a5; border-radius: 2px; background: linear-gradient(#eee, #ddd); margin-right: 1px; }
.chk.dim { color: #8b8b8b; height: 16px; }
.chk.dim i { border-color: #c8c8c8; background: #ebebeb; }
.phone { width: 347px; height: 500px; border: 2px solid #93b62a; background: #d2e0a6; font-family: "Liberation Sans", sans-serif; }
.status { height: 27px; background: #000; display: flex; align-items: center; justify-content: flex-end; padding-right: 6px; }
.status svg { width: 50px; height: 16px; margin-right: 7px; }
.status span { color: #3fa5cb; font: 15.500px/26px Roboto, sans-serif; }
.apptitle { height: 24px; background: #696969; color: #fff; padding-left: 12px; font: 500 12px/22px Roboto, sans-serif; letter-spacing: -.15px; }
.formbody { width: 320px; height: 460px; background: #fff; color: #000; letter-spacing: .15px; border-top: 1px solid #ccc; padding-top: 7px; }
.pb { height: 27px; background: #e8e8e8; border: 1px solid #cfcfcf; border-bottom-color: #a8a8a8; line-height: 26px; text-align: center; padding-left: 1px; }
.wide { margin: 0 2px; }
.lbl { height: 28px; line-height: 32px; text-align: center; }
.arr { height: 35px; border: 2px solid #000; background: #e8e8e8; display: flex; justify-content: center; padding-top: 2px; gap: 9px; margin-bottom: 5px; padding-right: 1px; }
.arr + .lbl { height: 21px; line-height: 18px; }
.w150 { width: 150px; }
.w60 { width: 60px; }
.w80 { width: 80px; }

.treebox { display: grid; grid-template: 463px 16px / 183px 17px; margin: 6px 0 0 6px; }
.tree { position: relative; overflow: hidden; }
.row { position: relative; height: 25px; display: flex; align-items: flex-start; line-height: 27px; white-space: nowrap; }
.row svg { width: 16px; height: 16px; margin: 1px 2px 0 0; }
.row svg.mn { width: 9px; height: 9px; margin: 5px 13px 0 0; }
.row.root { height: 27px; }
.row.root .mn { margin: 7px 7px 0 7px; }
.sel { display: flex; width: 72px; height: 26px; background: #d2e0a6; padding: 2px 0 0 6px; line-height: 27px; }
.l1 { padding-left: 45px; }
.l1 .mn { margin-left: -22px !important; }
.l2 { padding-left: 61px; }
.snip { position: absolute; left: 23px; top: 61px; width: 160px; height: 22px; padding-left: 32px; background: rgba(215, 235, 242, .4); color: #e0e5e1; font: 12px/22px "Open Sans", sans-serif; letter-spacing: -.45px; }
.vs, .scroll { background: #f1f1f1; display: flex; flex-direction: column; align-items: center; }
.vs b { width: 13px; height: 305px; background: #bcbcbc; border: 1px solid #a9a9a9; }
.up, .down, .left, .right { border: 4px solid transparent; width: 0; height: 0; flex: none; }
.up { border-top: 0; border-bottom-color: #a3a3a3; margin: 7px 0 6px; }
.down { border-bottom: 0; border-top-color: #444; margin: auto 0 7px; }
.hs { background: #f1f1f1; display: flex; align-items: center; }
.hs b { width: 130px; height: 13px; background: #bcbcbc; border: 1px solid #a9a9a9; margin-left: 7px; }
.left { border-left: 0; border-right-color: #999; margin-left: 6px; }
.right { border-right: 0; border-left-color: #444; margin: 0 7px 0 auto; }
.corner { background: #fff; }
.cbtns { display: flex; gap: 4px; padding: 5px 0 0 51px; }
.cbtns span { width: 58px; height: 25px; border: 1px solid #d5d5d5; border-radius: 3px; background: #ececec; color: #999; text-align: center; line-height: 24px; letter-spacing: .2px; }
.cbtns span + span { width: 48px; }

.pl { padding: 9px 0 0 9px; display: flex; flex-direction: column; align-items: flex-start; }
.pl label { line-height: 16px; height: 16px; padding-left: 2px; white-space: nowrap; }
.area, .inp, .sel2 { background: #fff; border: 1px solid #ccc; border-radius: 4px; }
.area { width: 125px; height: 28px; margin-bottom: 13px; display: flex; align-items: flex-end; justify-content: flex-end; }
.area svg { width: 9px; height: 9px; }
.sel2 { width: 39px; height: 24px; line-height: 24px; padding-left: 3px; margin-bottom: 9px; white-space: nowrap; }
.sel2.long { width: 57px; }
.inp { width: 136px; height: 26px; font-size: 10px; line-height: 24px; padding: 0 6px; margin-bottom: 13px; letter-spacing: .3px; }
.img { font-family: "Liberation Sans", sans-serif; }
.img span { display: block; overflow: hidden; white-space: nowrap; }
.color { height: 20px; margin-bottom: 9px; display: flex; line-height: 20px; margin-left: 3px; }
.color i { width: 11px; height: 16px; border: 1px solid #000; background: #fff; margin: 2px 9px 0 0; }

.scroll { width: 17px; }
.scroll b { width: 13px; height: 363px; background: #bcbcbc; border: 1px solid #a9a9a9; }

/* taskbar */
.taskbar { height: 40px; flex: none; display: flex; background: #080402; color: #fff; font-family: "Open Sans", "Noto Sans", sans-serif; }
.start { width: 48px; height: 40px; }
.search { width: 344px; background: #333; color: #9b9b9b; padding-left: 12px; font-size: 14px; line-height: 41px; letter-spacing: .08px; }
.tasks { width: 300px; height: 40px; }
.tray { width: 166px; height: 40px; margin-left: 388px; }
.lang, .clock { text-align: center; line-height: 17px; padding-top: 3px; white-space: nowrap; }
.lang { width: 36px; letter-spacing: -.3px; }
.clock { width: 78px; letter-spacing: -.4px; }
.peek { width: 1px; margin-left: 1px; background: #4a4a4a; }
```
